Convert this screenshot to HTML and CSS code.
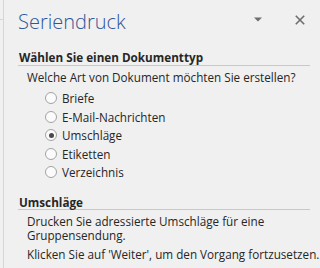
FILE: index.html
```html
<!DOCTYPE html>
<html lang="de">
<head>
<meta charset="utf-8">
<link rel="stylesheet" href="styles.css">
</head>
<body>
<div class="pane">
  <div class="tick"></div>
  <header class="head">
    <h1 class="title">Seriendruck</h1>
    <div class="tools">
      <svg class="drop" width="8" height="5" viewBox="0 0 8 5"><path d="M0 0.5h8L4 4.5z" fill="#6d6d6d"/></svg>
      <svg class="close" width="10" height="10" viewBox="0 0 10 10"><path d="M0.8 0.8l8.4 8.4M9.2 0.8l-8.4 8.4" stroke="#6d6d6d" stroke-width="1.6"/></svg>
    </div>
  </header>
  <section class="sect">
    <h2 class="sect-title first">Wählen Sie einen Dokumenttyp</h2>
    <p class="q">Welche Art von Dokument möchten Sie erstellen?</p>
    <ul class="opts">
      <li class="opt"><span class="radio"></span>Briefe</li>
      <li class="opt"><span class="radio"></span>E-Mail-Nachrichten</li>
      <li class="opt"><span class="radio on"></span>Umschläge</li>
      <li class="opt"><span class="radio"></span>Etiketten</li>
      <li class="opt"><span class="radio"></span>Verzeichnis</li>
    </ul>
  </section>
  <section class="sect">
    <h2 class="sect-title second">Umschläge</h2>
    <p class="txt">Drucken Sie adressierte Umschläge für eine Gruppensendung.</p>
    <p class="txt">Klicken Sie auf 'Weiter', um den Vorgang fortzusetzen.</p>
  </section>
</div>
</body>
</html>
```
FILE: styles.css
```css
html, body {
  margin: 0;
  padding: 0;
  background: #f0f0f0;
  height: 100%;
  overflow: hidden;
}
body {
  font-family: "Open Sans", "Noto Sans", sans-serif;
  color: #262626;
}
.pane {
  position: relative;
  margin-left: 3px;
  border-left: 1px solid #d6d6d6;
  height: 100%;
}
.tick {
  position: absolute;
  left: -4px;
  top: 19px;
  width: 4px;
  height: 1px;
  background: #d6d6d6;
}
.head {
  display: flex;
  align-items: center;
  justify-content: space-between;
  height: 40px;
  padding-left: 14px;
  padding-right: 15px;
}
.title {
  margin: 0;
  font-weight: 300;
  font-size: 20px;
  line-height: 28px;
  color: #2b579a;
  margin-top: 3px;
}
.tools {
  display: flex;
  align-items: center;
  gap: 33px;
  margin-top: -1px;
}
.sect {
  padding-left: 14px;
  margin-right: 10px;
}
.sect-title {
  margin: 0;
  padding-left: 1px;
  font-size: 11.7px;
  font-weight: 700;
  border-bottom: 1px solid #c8c8c8;
}
.sect-title.first {
  line-height: 16px;
  padding-top: 9px;
}
.sect-title.second {
  line-height: 14px;
  padding-top: 13px;
}
.q, .txt {
  margin: 0;
  padding-left: 9px;
  font-size: 11.7px;
}
.q {
  line-height: 16px;
  margin-top: 3px;
}
.opts {
  list-style: none;
  margin: 4px 0 0;
  padding: 0 0 0 27px;
}
.opt {
  display: flex;
  align-items: center;
  gap: 5px;
  font-size: 11.7px;
  height: 18.5px;
}
.radio {
  flex: none;
  width: 12px;
  height: 12px;
  border: 1px solid #a3a3a3;
  border-radius: 50%;
  background: #fbfbfb;
  box-sizing: border-box;
  position: relative;
}
.radio.on::after {
  content: "";
  position: absolute;
  left: 2.5px;
  top: 2.5px;
  width: 5px;
  height: 5px;
  border-radius: 50%;
  background: #4a4a4a;
}
.txt {
  line-height: 14px;
  margin-top: 4px;
  margin-right: -10px;
}
.txt + .txt { margin-top: 5px; }
```
